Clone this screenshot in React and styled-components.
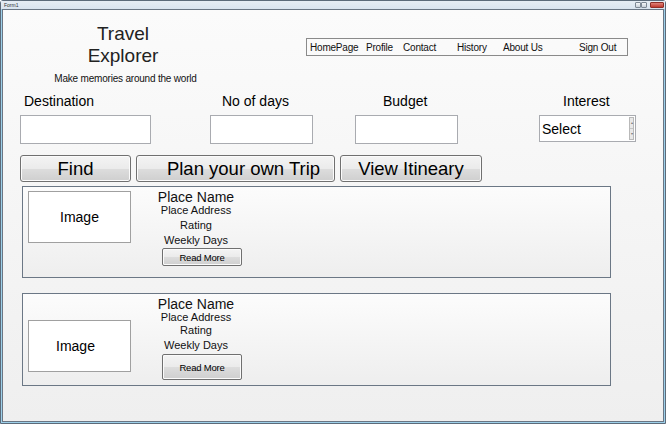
import React from "react";
import styled, { createGlobalStyle } from "styled-components";

const GlobalStyle = createGlobalStyle`
  html, body {
    margin: 0;
    padding: 0;
    background: #ffffff;
  }
  body {
    font-family: "Liberation Sans", Arial, sans-serif;
    color: #000000;
  }
  * {
    box-sizing: border-box;
  }
`;

const Window = styled.div`
  width: 666px;
  height: 424px;
  display: flex;
  flex-direction: column;
  border: 1px solid #5c6b7a;
  border-radius: 3px 3px 0 0;
  background: #9dd0ea;
  padding: 0 1px 1px;
`;

const TitleBar = styled.div`
  height: 8px;
  margin: 0 -1px;
  padding: 0 1px 0 3px;
  display: flex;
  align-items: flex-start;
  background: linear-gradient(#e6edf4, #d9e4ef);
`;

const Caption = styled.div`
  font-size: 5px;
  line-height: 8px;
  color: #333;
  flex: 1;
`;

const CaptionButton = styled.div`
  width: ${(p) => p.$w}px;
  height: 6px;
  margin-top: 1px;
  margin-left: ${(p) => p.$gap || 0}px;
  border: 1px solid ${(p) => (p.$close ? "#8e2f28" : "#7d8894")};
  border-radius: 1px;
  background: ${(p) => (p.$close ? "linear-gradient(#e0837a, #c2392e)" : "linear-gradient(#f4f6f8, #c9d1da)")};
`;

const Client = styled.div`
  flex: 1;
  border: 1px solid #6a7684;
  background: linear-gradient(#fbfbfb, #efefef);
  display: flex;
  flex-direction: column;
`;

const Header = styled.div`
  height: 78px;
  display: flex;
  align-items: flex-start;
`;

const Brand = styled.div`
  margin-left: 20px;
  width: 200px;
  padding-top: 13px;
  text-align: center;
`;

const Title = styled.div`
  font-size: 19px;
  line-height: 22px;
  color: #222;
`;

const Tagline = styled.div`
  margin-top: 6px;
  padding-left: 5px;
  font-size: 10px;
  line-height: 12px;
  letter-spacing: -0.2px;
  color: #111;
`;

const Nav = styled.nav`
  margin-left: 83px;
  margin-top: 28px;
  width: 322px;
  height: 18px;
  border: 1px solid #8a8a8a;
  padding: 1px 0 0 3px;
  display: flex;
`;

const NavItem = styled.span`
  width: ${(p) => (p.$w ? `${p.$w}px` : "auto")};
  flex: none;
  font-size: 10px;
  line-height: 16px;
  letter-spacing: -0.2px;
  color: #111;
`;

const FieldsRow = styled.div`
  display: flex;
  align-items: flex-start;
  padding: 5px 0 0 17px;
`;

const Field = styled.div`
  width: ${(p) => p.$w}px;
  margin-left: ${(p) => p.$ml}px;
  display: flex;
  flex-direction: column;
`;

const Label = styled.label`
  padding-left: ${(p) => p.$pl}px;
  font-size: 14px;
  line-height: 16px;
  margin-bottom: 6px;
`;

const TextBox = styled.div`
  height: 29px;
  border: 1px solid #a9abb0;
  background: #ffffff;
`;

const SelectBox = styled.div`
  height: 27px;
  border: 1px solid #a9abb0;
  background: #ffffff;
  padding: 0 1px 0 2px;
  display: flex;
  align-items: center;
  font-size: 14px;
`;

const Spinner = styled.div`
  margin-left: auto;
  width: 5px;
  height: 23px;
  display: flex;
  flex-direction: column;
  border: 1px solid #b9b9b9;
  background: #e8e8e8;
`;

const SpinHalf = styled.div`
  flex: 1;
  display: flex;
  align-items: center;
  justify-content: center;
  font-size: 4px;
  line-height: 1;
  color: #777;
  & + & {
    border-top: 1px solid #c4c4c4;
  }
`;

const ButtonRow = styled.div`
  display: flex;
  gap: 5px;
  padding-left: 17px;
  margin-top: 11px;
`;

const BigButton = styled.button`
  width: ${(p) => p.$w}px;
  height: 27px;
  padding: 0 0 0 ${(p) => p.$pl || 0}px;
  border: 1px solid #707070;
  border-radius: 3px;
  background: linear-gradient(#f4f4f4 0%, #ebebeb 50%, #dddddd 51%, #cfcfcf 100%);
  box-shadow: inset 0 0 0 1px #fbfbfb;
  font-family: "Liberation Sans", Arial, sans-serif;
  font-size: 18.5px;
  line-height: 25px;
  color: #000;
  text-align: center;
`;

const Results = styled.div`
  padding-left: 19px;
  margin-top: 4px;
  display: flex;
  flex-direction: column;
  gap: 15px;
`;

const Card = styled.div`
  width: 589px;
  height: ${(p) => p.$h}px;
  border: 1px solid #6b7785;
  background: linear-gradient(#fcfcfc, #eeeeee);
  padding-left: 5px;
  display: flex;
  align-items: flex-start;
`;

const ImageBox = styled.div`
  width: 103px;
  height: 52px;
  margin-top: ${(p) => p.$mt}px;
  padding-right: ${(p) => p.$shift || 0}px;
  border: 1px solid #a0a0a0;
  background: #ffffff;
  display: flex;
  align-items: center;
  justify-content: center;
  font-size: 14px;
`;

const Info = styled.div`
  margin-left: 23px;
  width: 84px;
  padding-top: 3px;
  display: flex;
  flex-direction: column;
  align-items: center;
  text-align: center;
  color: #111;
`;

const PlaceName = styled.div`
  font-size: 14px;
  line-height: 14px;
`;

const Detail = styled.div`
  font-size: 11px;
  line-height: ${(p) => p.$lh || 15}px;
  margin-top: ${(p) => p.$mt || 0}px;
`;

const ReadMore = styled.button`
  align-self: flex-start;
  margin-left: 8px;
  margin-top: ${(p) => p.$mt || 0}px;
  width: 80px;
  height: ${(p) => p.$h}px;
  padding: 0;
  border: 1px solid #707070;
  border-radius: 2px;
  background: linear-gradient(#f4f4f4 0%, #ebebeb 50%, #dddddd 51%, #cfcfcf 100%);
  box-shadow: inset 0 0 0 1px #fbfbfb;
  font-family: "Liberation Sans", Arial, sans-serif;
  font-size: 9.5px;
  letter-spacing: -0.2px;
  color: #000;
`;

const navLinks = [
  { label: "HomePage", w: 56 },
  { label: "Profile", w: 37 },
  { label: "Contact", w: 54 },
  { label: "History", w: 46 },
  { label: "About Us", w: 76 },
  { label: "Sign Out" },
];

const places = [
  { h: 92, imgTop: 4, ratingGap: 2, btnH: 18, btnGap: 0, shift: 0 },
  { h: 93, imgTop: 26, ratingGap: 0, btnH: 26, btnGap: 1, shift: 8 },
];

export default function App() {
  return (
    <>
      <GlobalStyle />
      <Window>
        <TitleBar>
          <Caption>Form1</Caption>
          <CaptionButton $w={6} />
          <CaptionButton $w={6} />
          <CaptionButton $w={14} $gap={3} $close />
        </TitleBar>
        <Client>
          <Header>
            <Brand>
              <Title>Travel</Title>
              <Title>Explorer</Title>
              <Tagline>Make memories around the world</Tagline>
            </Brand>
            <Nav>
              {navLinks.map((link) => (
                <NavItem key={link.label} $w={link.w}>
                  {link.label}
                </NavItem>
              ))}
            </Nav>
          </Header>

          <FieldsRow>
            <Field $w={131} $ml={0}>
              <Label $pl={4}>Destination</Label>
              <TextBox />
            </Field>
            <Field $w={103} $ml={59}>
              <Label $pl={12}>No of days</Label>
              <TextBox />
            </Field>
            <Field $w={103} $ml={42}>
              <Label $pl={28}>Budget</Label>
              <TextBox />
            </Field>
            <Field $w={97} $ml={81}>
              <Label $pl={24}>Interest</Label>
              <SelectBox>
                Select
                <Spinner>
                  <SpinHalf>▴</SpinHalf>
                  <SpinHalf>▾</SpinHalf>
                </Spinner>
              </SelectBox>
            </Field>
          </FieldsRow>

          <ButtonRow>
            <BigButton $w={111}>Find</BigButton>
            <BigButton $w={199} $pl={16}>
              Plan your own Trip
            </BigButton>
            <BigButton $w={142}>View Itineary</BigButton>
          </ButtonRow>

          <Results>
            {places.map((p, i) => (
              <Card key={i} $h={p.h}>
                <ImageBox $mt={p.imgTop} $shift={p.shift}>
                  Image
                </ImageBox>
                <Info>
                  <PlaceName>Place Name</PlaceName>
                  <Detail $lh={12}>Place Address</Detail>
                  <Detail $mt={p.ratingGap}>Rating</Detail>
                  <Detail>Weekly Days</Detail>
                  <ReadMore $h={p.btnH} $mt={p.btnGap}>
                    Read More
                  </ReadMore>
                </Info>
              </Card>
            ))}
          </Results>
        </Client>
      </Window>
    </>
  );
}
